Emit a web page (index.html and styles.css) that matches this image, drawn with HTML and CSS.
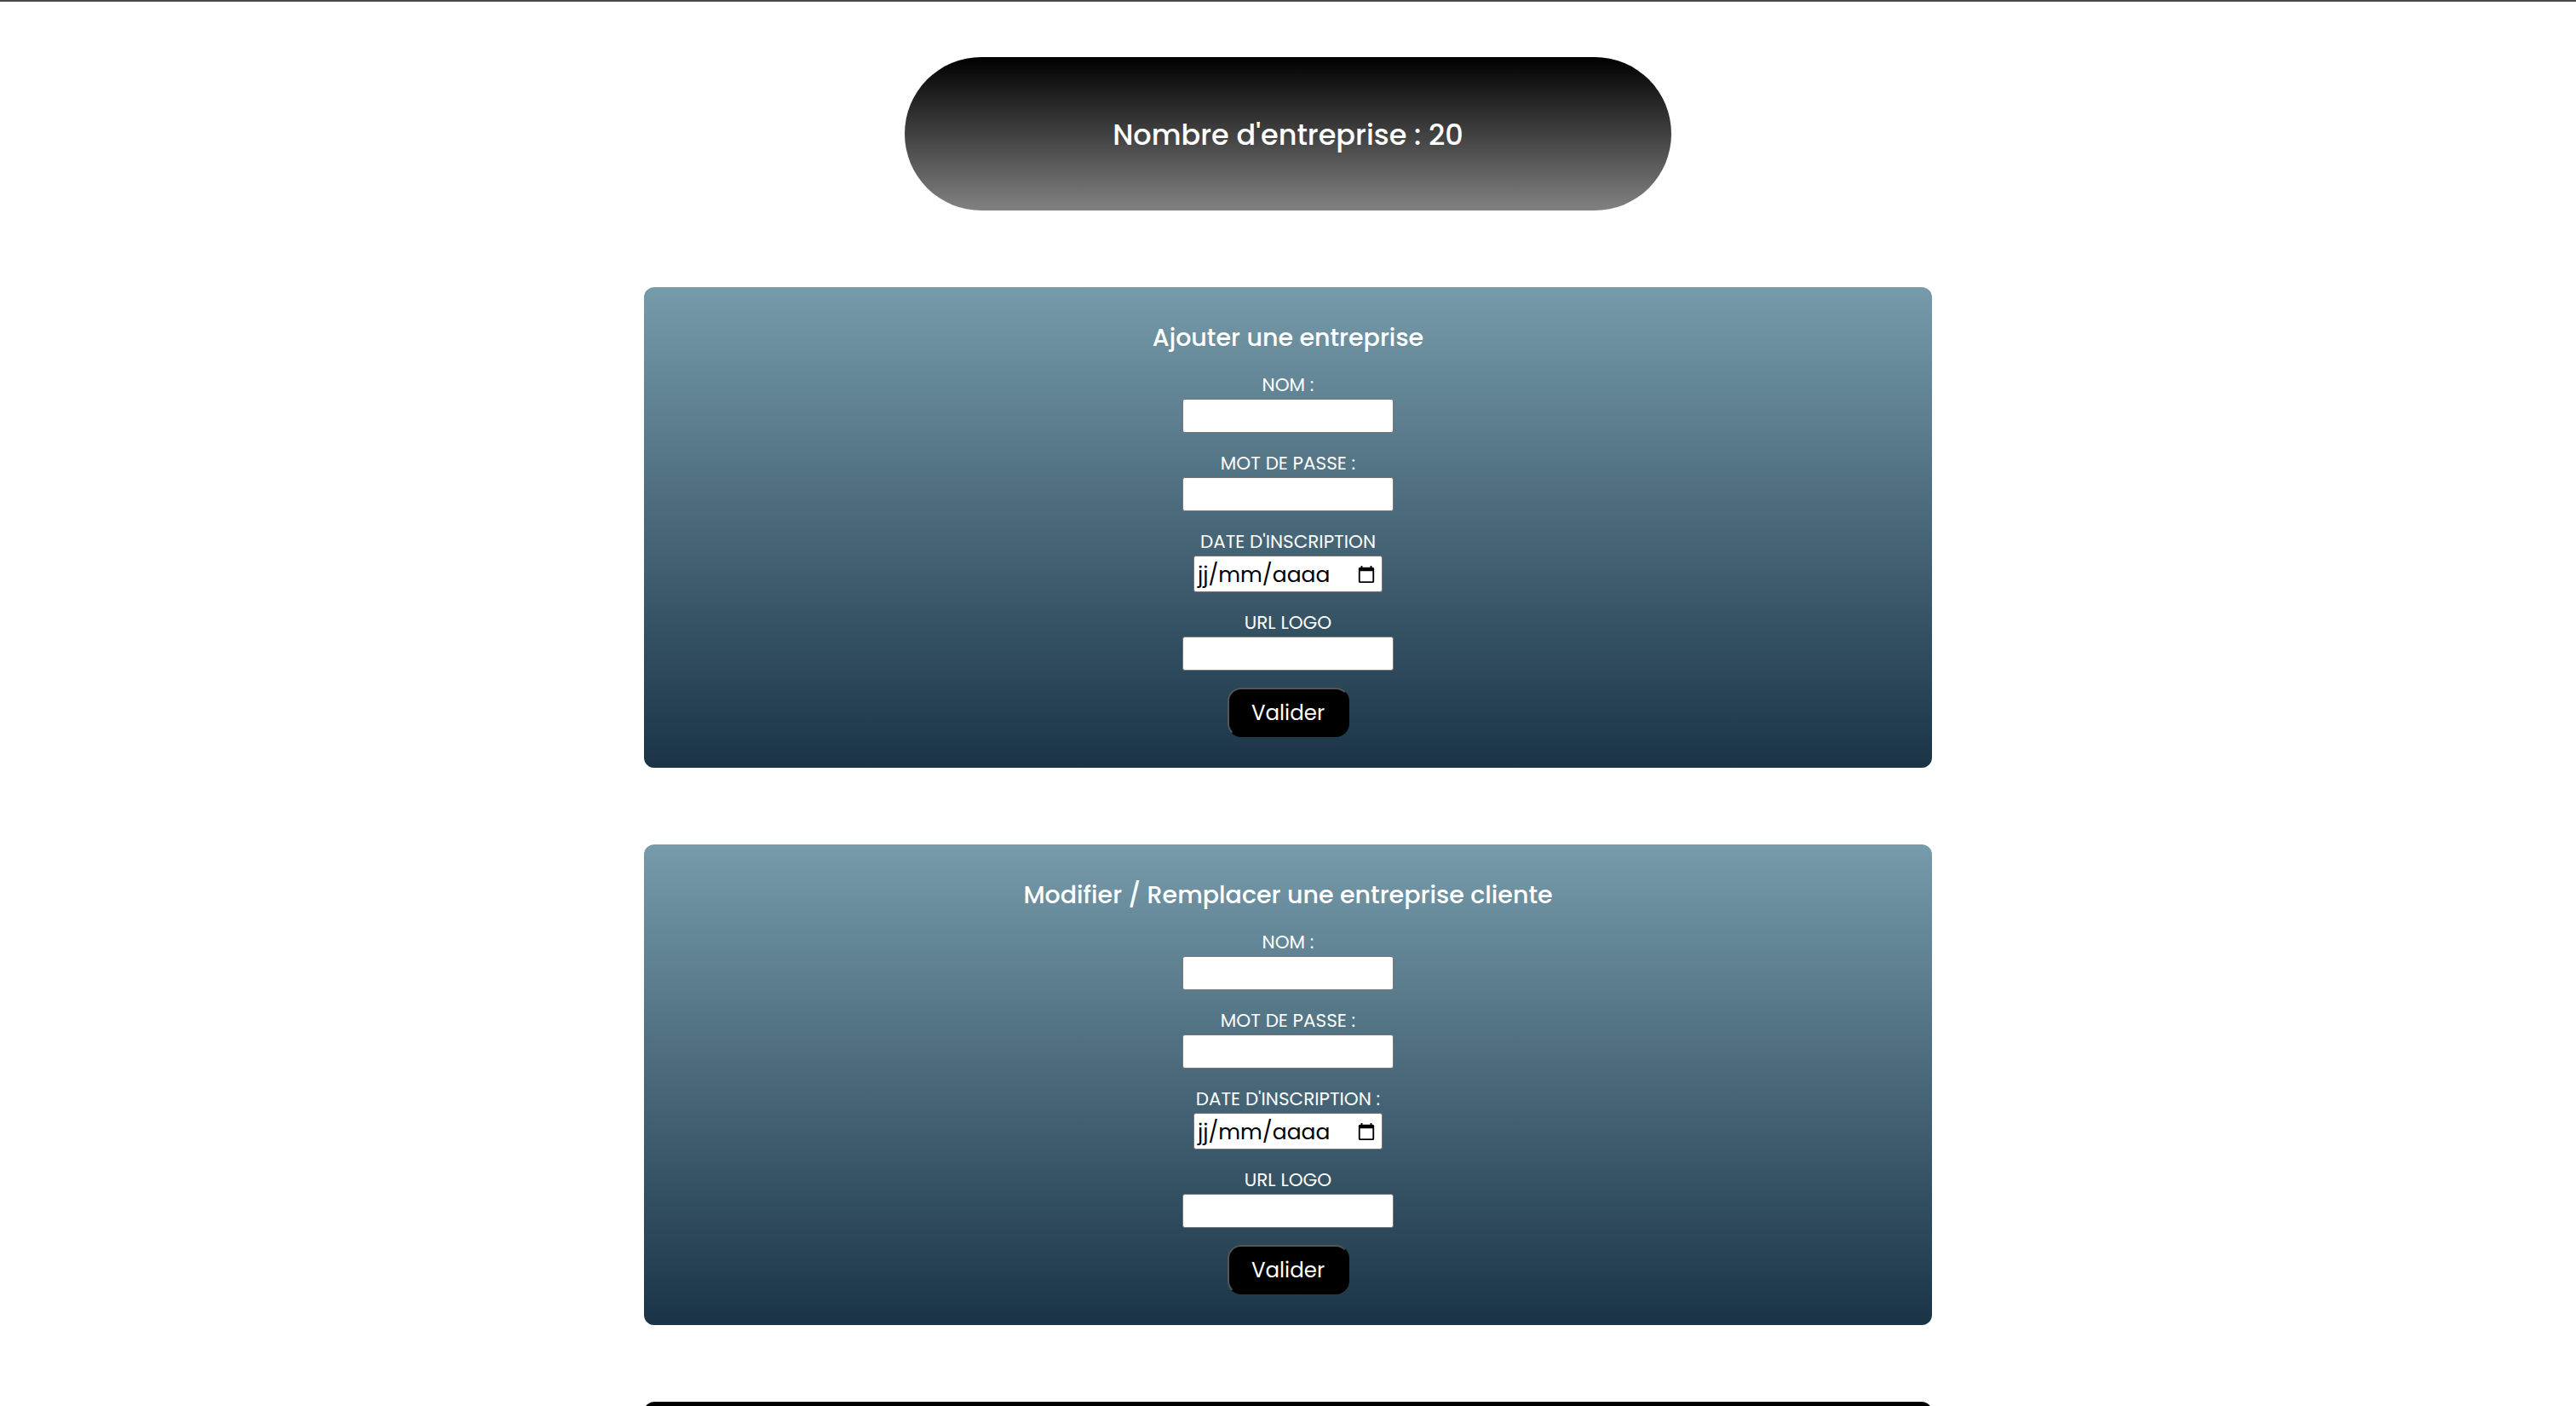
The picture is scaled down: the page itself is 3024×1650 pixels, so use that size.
FILE: index.html
```html
<!DOCTYPE html>
<html lang="fr">
<head>
<meta charset="utf-8">
<title>Entreprises</title>
<link rel="stylesheet" href="styles.css">
</head>
<body>
<div class="topline"></div>
<main class="page">
  <div class="counter">Nombre d'entreprise : 20</div>

  <section class="card">
    <h2 class="card-title">Ajouter une entreprise</h2>
    <form class="form">
      <label class="field-label">NOM :</label>
      <input class="field-input" type="text">
      <label class="field-label">MOT DE PASSE :</label>
      <input class="field-input" type="password">
      <label class="field-label">DATE D'INSCRIPTION</label>
      <div class="date-input">
        <span class="date-text"><span>jj</span><span class="sep">/</span><span>mm</span><span class="sep">/</span><span>aaaa</span></span>
        <svg class="cal-icon" viewBox="0 0 24 24" width="22" height="22"><path d="M20 3h-1V1h-2v2H7V1H5v2H4c-1.1 0-2 .9-2 2v16c0 1.1.9 2 2 2h16c1.1 0 2-.9 2-2V5c0-1.1-.9-2-2-2zm0 18H4V8h16v13z" fill="#000"/></svg>
      </div>
      <label class="field-label">URL LOGO</label>
      <input class="field-input" type="text">
      <button class="submit" type="button">Valider</button>
    </form>
  </section>

  <section class="card">
    <h2 class="card-title">Modifier / Remplacer une entreprise cliente</h2>
    <form class="form">
      <label class="field-label">NOM :</label>
      <input class="field-input" type="text">
      <label class="field-label">MOT DE PASSE :</label>
      <input class="field-input" type="password">
      <label class="field-label">DATE D'INSCRIPTION :</label>
      <div class="date-input">
        <span class="date-text"><span>jj</span><span class="sep">/</span><span>mm</span><span class="sep">/</span><span>aaaa</span></span>
        <svg class="cal-icon" viewBox="0 0 24 24" width="22" height="22"><path d="M20 3h-1V1h-2v2H7V1H5v2H4c-1.1 0-2 .9-2 2v16c0 1.1.9 2 2 2h16c1.1 0 2-.9 2-2V5c0-1.1-.9-2-2-2zm0 18H4V8h16v13z" fill="#000"/></svg>
      </div>
      <label class="field-label">URL LOGO</label>
      <input class="field-input" type="text">
      <button class="submit" type="button">Valider</button>
    </form>
  </section>

  <section class="card card-list"></section>
</main>
</body>
</html>
```

FILE: styles.css
```css
html, body {
  margin: 0;
  padding: 0;
  background: #ffffff;
}

body {
  font-family: "Poppins", "Inter", sans-serif;
  overflow: hidden;
}

.topline {
  height: 2px;
  background: #474747;
}

.page {
  display: flex;
  flex-direction: column;
  align-items: center;
  padding-top: 65px;
  gap: 90px;
}

.counter {
  box-sizing: border-box;
  width: 900px;
  height: 180px;
  padding-top: 3px;
  border-radius: 90px;
  background: linear-gradient(to bottom, #000000, #818181);
  color: #ffffff;
  display: flex;
  align-items: center;
  justify-content: center;
  font-size: 33.5px;
  font-weight: 500;
}

.card {
  box-sizing: border-box;
  width: 1512px;
  border-radius: 12px;
  background: linear-gradient(to bottom, #769bab, #1a3446);
  padding: 41px 0 36px;
  color: #ffffff;
  display: flex;
  flex-direction: column;
  align-items: center;
}

.card-list {
  height: 420px;
  background: #000000;
}

.card-title {
  margin: 0;
  font-size: 28.5px;
  line-height: 36px;
  font-weight: 500;
}

.form {
  margin-top: 24px;
  display: flex;
  flex-direction: column;
  align-items: center;
}

.field-label {
  font-size: 21.5px;
  line-height: 24px;
  font-weight: 400;
  padding-top: 2px;
  margin-bottom: 4px;
}

.field-input {
  box-sizing: border-box;
  width: 248px;
  height: 40px;
  border: 1px solid #767676;
  border-radius: 3px;
  background: #ffffff;
  margin: 0 0 22px;
  padding: 0 4px;
  font-family: inherit;
  font-size: 26px;
}

.date-input {
  box-sizing: border-box;
  width: 222px;
  height: 43px;
  border: 1px solid #767676;
  border-radius: 3px;
  background: #ffffff;
  margin: 0 0 22px;
  padding: 0 7px 0 4px;
  display: flex;
  align-items: center;
  color: #000000;
}

.date-text {
  display: flex;
  gap: 0;
  font-size: 25px;
  line-height: 1;
  padding-top: 2px;
}

.sep {
  padding: 0;
}

.cal-icon {
  margin-left: auto;
  display: block;
}

.submit {
  margin-top: -2px;
  box-sizing: border-box;
  width: 143px;
  height: 58px;
  background: #000000;
  color: #ffffff;
  border: 2px solid;
  border-color: #555555 #000000 #000000 #555555;
  border-radius: 16px;
  font-family: inherit;
  font-size: 24.5px;
  padding: 0;
}
```
